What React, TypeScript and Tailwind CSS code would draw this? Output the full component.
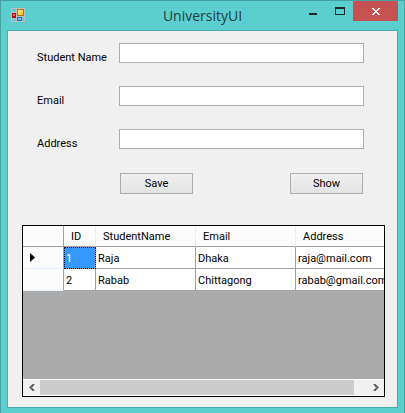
import { useState } from "react";

const fields = [
  { id: "student-name", label: "Student Name" },
  { id: "email", label: "Email" },
  { id: "address", label: "Address" },
];

const rows = [
  { id: 1, name: "Raja", email: "Dhaka", address: "raja@mail.com" },
  { id: 2, name: "Rabab", email: "Chittagong", address: "rabab@gmail.com" },
];

function AppIcon() {
  return (
    <svg width="14" height="14" viewBox="0 0 14 14" shapeRendering="crispEdges" aria-hidden="true">
      <defs>
        <linearGradient id="gold" x1="0" y1="0" x2="1" y2="1">
          <stop offset="0" stopColor="#fff0a0" />
          <stop offset="1" stopColor="#f5b400" />
        </linearGradient>
      </defs>
      <path d="M0 .5H14M0 13.5H14M.5 0V14M5.5 0V14M13.5 0V14M0 4.5H5M0 10.5H5M5 8.5H14" stroke="#c3bfc0" fill="none" />
      <rect x="1" y="5" width="4" height="5" fill="#a80f10" />
      <rect x="2" y="6" width="2" height="2" fill="#ef6a5c" />
      <rect x="6" y="1" width="7" height="7" fill="#a8780a" />
      <rect x="7" y="2" width="5" height="5" fill="url(#gold)" />
      <rect x="6" y="9" width="5" height="4" fill="#3568c8" />
      <rect x="7" y="10" width="3" height="2" fill="#86b2f5" />
    </svg>
  );
}

function TitleBar() {
  return (
    <header className="grid h-[29px] grid-cols-[1fr_auto_1fr] items-start">
      <div className="pt-[7px] pl-1">
        <AppIcon />
      </div>
      <h1 className="pt-[5px] font-['Open_Sans',sans-serif] text-[14px] leading-5 text-[#243c3d]">UniversityUI</h1>
      <div className="flex h-5 justify-end">
        <button type="button" aria-label="Minimize" className="flex w-[26px] justify-center pt-3">
          <svg width="8" height="2" aria-hidden="true">
            <path d="M0 0H8V2H0Z" fill="#1f2829" />
          </svg>
        </button>
        <button type="button" aria-label="Maximize" className="flex w-[27px] justify-center pt-[6px]">
          <svg width="10" height="8" shapeRendering="crispEdges" aria-hidden="true">
            <path d="M0 0H10V8H0ZM1 2V7H9V2Z" fill="#1f2829" fillRule="evenodd" />
          </svg>
        </button>
        <button type="button" aria-label="Close" className="flex w-[45px] justify-center bg-[#c75050] pt-[7px]">
          <svg width="8" height="7" viewBox="0 0 8 7" shapeRendering="crispEdges" aria-hidden="true">
            <path d="M0 0H2V1H3V2H5V1H6V0H8V1H7V2H6V3H5V4H6V5H7V6H8V7H6V6H5V5H3V6H2V7H0V6H1V5H2V4H3V3H2V2H1V1H0Z" fill="#fff" />
          </svg>
        </button>
      </div>
    </header>
  );
}

const buttonClass =
  "h-[21px] w-[73px] border border-[#acacac] bg-linear-to-b from-[#f0f0f0] to-[#e3e3e3] pt-px text-center leading-[18px]";

const headCell = "border-b border-[#a0a0a0] bg-[#fcfcfc] pt-[2px] pl-[7px] text-left font-normal";
const bodyCell = "border-r border-b border-[#a0a0a0] bg-white pt-[2px] pl-[2px]";

export default function App() {
  const [selected, setSelected] = useState(1);

  return (
    <div className="flex min-h-screen flex-col border-x border-t border-[#4aa0a0] bg-[#5bcfcf] px-[6px] pb-[5px] font-['Roboto',sans-serif] text-[11px] leading-4 text-black">
      <TitleBar />
      <main className="flex flex-1 flex-col border border-[#49abab] bg-[#f0f0f0] pt-3 pr-3 pb-[10px] pl-[14px]">
        <form className="flex flex-col gap-[23px] pr-[21px] pl-[15px]" onSubmit={(e) => e.preventDefault()}>
          {fields.map((f) => (
            <div key={f.id} className="flex h-5">
              <label htmlFor={f.id} className="w-[82px] shrink-0 pt-[7px] whitespace-nowrap">
                {f.label}
              </label>
              <input id={f.id} type="text" className="h-5 min-w-0 flex-1 border border-[#abadb3] bg-white px-1 outline-none" />
            </div>
          ))}
          <div className="flex justify-between pt-px pr-px pl-[83px]">
            <button type="submit" className={buttonClass}>
              Save
            </button>
            <button type="button" className={buttonClass}>
              Show
            </button>
          </div>
        </form>

        <section className="mt-[31px] flex min-h-[172px] flex-1 flex-col border border-black bg-[#ababab]">
          <div className="flex-1 overflow-hidden">
            <table className="w-[373px] table-fixed border-separate border-spacing-0 whitespace-nowrap">
              <colgroup>
                <col className="w-[41px]" />
                <col className="w-[32px]" />
                <col className="w-[100px]" />
                <col className="w-[100px]" />
                <col className="w-[100px]" />
              </colgroup>
              <thead>
                <tr className="h-[21px]">
                  <th aria-label="Row" className={`${headCell} border-r`} />
                  <th className={`${headCell} border-r border-r-[#e3effa]`}>ID</th>
                  <th className={`${headCell} border-r border-r-[#e3effa]`}>StudentName</th>
                  <th className={`${headCell} border-r border-r-[#e3effa]`}>Email</th>
                  <th className={headCell}>Address</th>
                </tr>
              </thead>
              <tbody>
                {rows.map((r) => (
                  <tr key={r.id} className="h-[22px]" onClick={() => setSelected(r.id)}>
                    <td className="border-r border-b border-r-[#a0a0a0] border-b-[#e3effa] bg-[#fcfcfc] pl-[7px]">
                      {selected === r.id && (
                        <svg width="5" height="9" viewBox="0 0 5 9" aria-hidden="true">
                          <path d="M0 0L5 4.5L0 9Z" fill="#000" />
                        </svg>
                      )}
                    </td>
                    {selected === r.id ? (
                      <td className="border-r border-b border-[#a0a0a0] bg-[#3399ff] pt-[2px] pl-[2px] text-white outline-1 -outline-offset-1 outline-black outline-dotted">
                        {r.id}
                      </td>
                    ) : (
                      <td className={bodyCell}>{r.id}</td>
                    )}
                    <td className={bodyCell}>{r.name}</td>
                    <td className={bodyCell}>{r.email}</td>
                    <td className={bodyCell}>{r.address}</td>
                  </tr>
                ))}
              </tbody>
            </table>
          </div>
          <div className="flex h-[17px] border-y border-white bg-[#f0f0f0]">
            <button type="button" aria-label="Scroll left" className="flex w-[17px] items-center justify-center">
              <svg width="6" height="7" viewBox="0 0 6 7" aria-hidden="true">
                <path d="M5 0L1.5 3.5L5 7" fill="none" stroke="#606060" strokeWidth="2" />
              </svg>
            </button>
            <div className="flex-1">
              <div className="h-full w-[96%] bg-[#cdcdcd]" />
            </div>
            <button type="button" aria-label="Scroll right" className="flex w-[17px] items-center justify-center">
              <svg width="6" height="7" viewBox="0 0 6 7" aria-hidden="true">
                <path d="M1 0L4.5 3.5L1 7" fill="none" stroke="#606060" strokeWidth="2" />
              </svg>
            </button>
          </div>
        </section>
      </main>
    </div>
  );
}
